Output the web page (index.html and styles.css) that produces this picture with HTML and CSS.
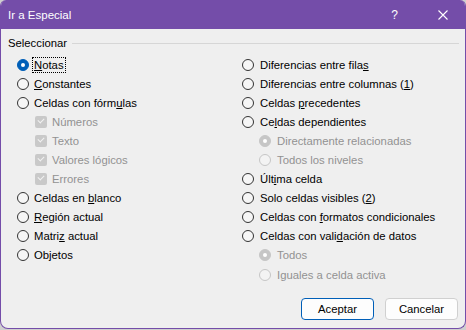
FILE: index.html
```html
<!DOCTYPE html>
<html>
<head>
  <title>Ir a Especial</title>
  <link rel="stylesheet" href="styles.css">
</head>
<body>
  <div class="dialog">
    <div class="titlebar">
      <span class="title">Ir a Especial</span>
      <span class="help">?</span>
      <span class="close">
        <svg width="10" height="10" viewBox="0 0 10 10">
          <path d="M0.5 0.5 L9.5 9.5 M9.5 0.5 L0.5 9.5" stroke="#fff" stroke-width="1.1" fill="none"/>
        </svg>
      </span>
    </div>

    <div class="content">
      <div class="group-label">
        <span>Seleccionar</span>
        <span class="rule"></span>
      </div>

      <div class="columns">
        <div class="col left">
          <div class="row"><span class="radio checked"></span><span class="focus"><u>N</u>otas</span></div>
          <div class="row"><span class="radio"></span><span><u>C</u>onstantes</span></div>
          <div class="row"><span class="radio"></span><span>Celdas con fórm<u>u</u>las</span></div>
          <div class="row sub disabled"><span class="check"></span><span>Números</span></div>
          <div class="row sub disabled"><span class="check"></span><span>Texto</span></div>
          <div class="row sub disabled"><span class="check"></span><span>Valores lógicos</span></div>
          <div class="row sub disabled"><span class="check"></span><span>Errores</span></div>
          <div class="row"><span class="radio"></span><span>Celdas en <u>b</u>lanco</span></div>
          <div class="row"><span class="radio"></span><span><u>R</u>egión actual</span></div>
          <div class="row"><span class="radio"></span><span>Matri<u>z</u> actual</span></div>
          <div class="row"><span class="radio"></span><span>Objetos</span></div>
        </div>

        <div class="col right">
          <div class="row"><span class="radio"></span><span>Diferencias entre fila<u>s</u></span></div>
          <div class="row"><span class="radio"></span><span>Diferencias entre columnas (<u>1</u>)</span></div>
          <div class="row"><span class="radio"></span><span>Celdas <u>p</u>recedentes</span></div>
          <div class="row"><span class="radio"></span><span>Ce<u>l</u>das dependientes</span></div>
          <div class="row sub disabled"><span class="radio checked"></span><span>Directamente relacionadas</span></div>
          <div class="row sub disabled"><span class="radio"></span><span>Todos los niveles</span></div>
          <div class="row"><span class="radio"></span><span>Últ<u>i</u>ma celda</span></div>
          <div class="row"><span class="radio"></span><span>Solo celdas visibles (<u>2</u>)</span></div>
          <div class="row"><span class="radio"></span><span>Celdas con <u>f</u>ormatos condicionales</span></div>
          <div class="row"><span class="radio"></span><span>Celdas con vali<u>d</u>ación de datos</span></div>
          <div class="row sub disabled"><span class="radio checked"></span><span>Todos</span></div>
          <div class="row sub disabled"><span class="radio"></span><span>Iguales a celda activa</span></div>
        </div>
      </div>

      <div class="actions">
        <button class="btn primary">Aceptar</button>
        <button class="btn">Cancelar</button>
      </div>
    </div>
  </div>
</body>
</html>
```

FILE: styles.css
```css
body {
  margin: 0;
  padding: 0;
  background-color: #cfcfcf;
  font-family: "Liberation Sans", Arial, sans-serif;
  font-size: 11.3px;
  color: #000;
}

.dialog {
  width: 466px;
  height: 329px;
  box-sizing: border-box;
  border: 1px solid #744da9;
  border-top: none;
  border-radius: 6px 6px 8px 8px;
  background-color: #efefef;
  overflow: hidden;
  display: flex;
  flex-direction: column;
}

.titlebar {
  height: 29px;
  background-color: #744da9;
  color: #fff;
  display: flex;
  align-items: center;
  padding-left: 8px;
  margin: 0 -1px;
}

.title {
  flex: 1;
  font-size: 11.5px;
  padding-top: 1px;
}

.help {
  font-size: 12px;
  margin-right: 40px;
}

.close {
  display: flex;
  margin-right: 18px;
}

.content {
  flex: 1;
  display: flex;
  flex-direction: column;
}

.group-label {
  display: flex;
  align-items: center;
  height: 14px;
  margin-top: 7px;
  padding-left: 7px;
  padding-right: 6px;
}

.rule {
  flex: 1;
  height: 1px;
  background-color: #d6d6d6;
  margin-left: 5px;
}

.columns {
  display: grid;
  grid-template-columns: 241px 1fr;
  margin-top: 5px;
}

.col.left {
  padding-left: 16px;
}

.row {
  height: 19.1px;
  display: flex;
  align-items: center;
  white-space: nowrap;
}

.row.sub {
  padding-left: 18px;
}

.col.right .row.sub {
  padding-left: 17px;
}

.disabled {
  color: #929292;
}

.radio {
  width: 12px;
  height: 12px;
  box-sizing: border-box;
  border: 1px solid #333;
  border-radius: 50%;
  background-color: #f6f6f6;
  margin-right: 5px;
  position: relative;
  flex-shrink: 0;
}

.col.right .radio {
  margin-right: 6px;
}

.radio.checked {
  border-color: #005fb8;
  background-color: #005fb8;
}

.radio.checked::after {
  content: "";
  position: absolute;
  left: 3px;
  top: 3px;
  width: 4px;
  height: 4px;
  border-radius: 50%;
  background-color: #fff;
}

.disabled .radio {
  border-color: #c6c6c6;
  background-color: #f3f3f3;
}

.disabled .radio.checked {
  background-color: #c6c6c6;
}

.check {
  width: 12px;
  height: 12px;
  border-radius: 2px;
  background-color: #c9c9c9;
  margin-right: 5px;
  position: relative;
  flex-shrink: 0;
}

.check::after {
  content: "";
  position: absolute;
  left: 3px;
  top: 2px;
  width: 5px;
  height: 3px;
  border-left: 1px solid #f2f2f2;
  border-bottom: 1px solid #f2f2f2;
  transform: rotate(-45deg);
}

.focus {
  outline: 1px dotted #000;
  outline-offset: 1px;
}

u {
  text-underline-offset: 1px;
}

.actions {
  display: flex;
  justify-content: flex-end;
  gap: 11px;
  padding-right: 7px;
  margin-top: 14px;
}

.btn {
  width: 73px;
  height: 22px;
  font-family: "Liberation Sans", Arial, sans-serif;
  font-size: 11.3px;
  color: #000;
  background-color: #fdfdfd;
  border: 1px solid #d0d0d0;
  border-radius: 4px;
  padding: 0;
}

.btn.primary {
  border-color: #005fb8;
}
```
